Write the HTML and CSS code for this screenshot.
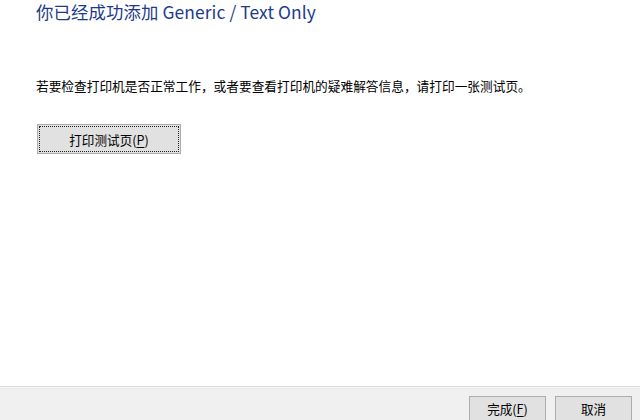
FILE: index.html
```html
<!DOCTYPE html>
<html lang="zh-CN">
<head>
<meta charset="utf-8">
<link rel="stylesheet" href="styles.css">
</head>
<body>
<div class="window">
  <main class="content">
    <h1 class="title">你已经成功添加 Generic / Text Only</h1>
    <p class="desc">若要检查打印机是否正常工作，或者要查看打印机的疑难解答信息，请打印一张测试页。</p>
    <div class="action">
      <button class="btn btn-test"><span class="focus">打印测试页(<u>P</u>)</span></button>
    </div>
  </main>
  <footer class="footer">
    <button class="btn btn-foot">完成(<u>F</u>)</button>
    <button class="btn btn-foot">取消</button>
  </footer>
</div>
</body>
</html>
```

FILE: styles.css
```css
html, body {
  margin: 0;
  padding: 0;
  background: #ffffff;
}
body {
  width: 640px;
  height: 420px;
  overflow: hidden;
  font-family: "Noto Sans CJK SC", "Noto Sans", sans-serif;
  color: #000;
}
.window {
  height: 420px;
  display: flex;
  flex-direction: column;
}
.content {
  flex: 1;
  padding: 0 0 0 36px;
}
.title {
  margin: 0;
  padding-top: 0;
  font-size: 17.4px;
  font-weight: normal;
  color: #1c3b8c;
  line-height: 24px;
  letter-spacing: 0.1px;
}
.desc {
  margin: 53px 0 0 0;
  font-size: 12.7px;
  font-weight: normal;
  line-height: 18px;
  color: #000;
}
.action {
  margin-top: 29px;
}
.btn {
  font-family: "Noto Sans CJK SC", "Noto Sans", sans-serif;
  font-size: 12.6px;
  font-weight: normal;
  color: #000;
  background: #e1e1e1;
  border: 1px solid #adadad;
  padding: 0;
  margin: 0;
}
.btn u {
  text-decoration: underline;
  text-underline-offset: 2px;
}
.btn-test {
  margin-left: 1px;
  width: 144px;
  height: 30px;
  display: flex;
  padding: 1px;
}
.focus {
  flex: 1;
  display: flex;
  align-items: center;
  justify-content: center;
  border: 1px dotted #222;
}
.footer {
  height: 34px;
  border-top: 1px solid #dcdcdc;
  box-shadow: inset 0 1px 0 #f8f8f8, inset 0 2px 0 #e8e8e8;
  background: #f0f0f0;
  display: flex;
  justify-content: flex-end;
  align-items: flex-start;
  gap: 9px;
  padding: 9px 8px 0 0;
  box-sizing: border-box;
}
.btn-foot {
  width: 77px;
  height: 25px;
  flex: none;
}
```
